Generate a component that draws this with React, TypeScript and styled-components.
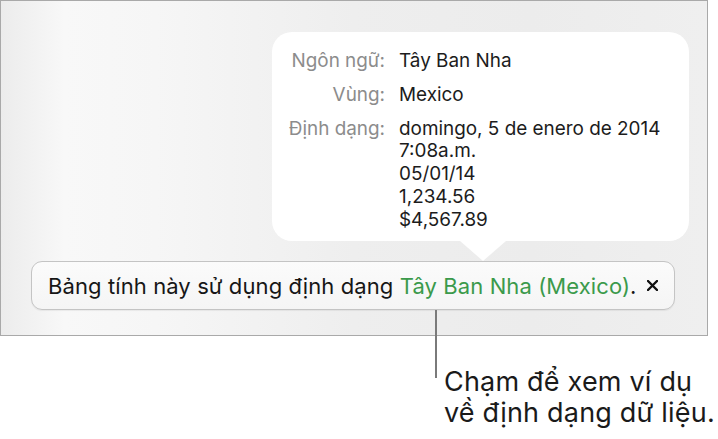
import styled, { createGlobalStyle } from "styled-components";

const Global = createGlobalStyle`
  html, body {
    margin: 0;
    padding: 0;
    background: #fff;
  }
  body {
    font-family: Inter, "Noto Sans", "Liberation Sans", sans-serif;
  }
`;

const rows = [
  { label: "Ngôn ngữ:", values: ["Tây Ban Nha"] },
  { label: "Vùng:", values: ["Mexico"] },
  {
    label: "Định dạng:",
    values: [
      "domingo, 5 de enero de 2014",
      "7:08a.m.",
      "05/01/14",
      "1,234.56",
      "$4,567.89",
    ],
  },
];

const CloseIcon = () => (
  <svg width="11" height="11" viewBox="0 0 11 11">
    <path d="M1 1 L10 10 M10 1 L1 10" stroke="#111" strokeWidth="2.4" strokeLinecap="round" />
  </svg>
);

const App = () => {
  return (
    <Page>
      <Global />
      <Frame>
        <Popover>
          {rows.map((r) => (
            <Row key={r.label}>
              <Label>{r.label}</Label>
              <Values>
                {r.values.map((v) => (
                  <div key={v}>{v}</div>
                ))}
              </Values>
            </Row>
          ))}
        </Popover>
        <Banner>
          <BannerText>
            Bảng tính này sử dụng định dạng <Green>Tây Ban Nha (Mexico)</Green>.
          </BannerText>
          <Close>
            <CloseIcon />
          </Close>
        </Banner>
      </Frame>
      <Callout>
        <Leader />
        <CalloutText>
          Chạm để xem ví dụ
          <br />
          về định dạng dữ liệu.
        </CalloutText>
      </Callout>
    </Page>
  );
};

export default App;

const Page = styled.div`
  width: 718px;
  height: 439px;
  overflow: hidden;
  background: #fff;
`;

const Frame = styled.div`
  box-sizing: border-box;
  width: 708px;
  height: 336px;
  border: 1.5px solid #a9a9a9;
  background: linear-gradient(
    90deg,
    #ececec 0%,
    #f8f8f8 9%,
    #f6f6f6 22%,
    #eeeeee 50%,
    #ececec 75%,
    #efefef 100%
  );
  display: flex;
  flex-direction: column;
  padding: 31px 0 0 30px;
`;

const Popover = styled.div`
  position: relative;
  box-sizing: border-box;
  margin-left: 241px;
  width: 417px;
  height: 209px;
  background: #fff;
  border-radius: 20px;
  padding: 18px 0 0 0;
  display: flex;
  flex-direction: column;
  gap: 11px;

  &::after {
    content: "";
    position: absolute;
    left: 188px;
    bottom: -20px;
    width: 0;
    height: 0;
    border-left: 23px solid transparent;
    border-right: 23px solid transparent;
    border-top: 20px solid #fff;
  }
`;

const Row = styled.div`
  display: flex;
  align-items: flex-start;
  font-size: 18.9px;
  line-height: 22.8px;
`;

const Label = styled.div`
  width: 113px;
  text-align: right;
  color: #8c8c8c;
  flex-shrink: 0;
`;

const Values = styled.div`
  margin-left: 14px;
  color: #1c1c1c;
`;

const Banner = styled.div`
  box-sizing: border-box;
  margin-top: 20px;
  width: 644px;
  height: 49px;
  border: 1px solid #c4c4c4;
  border-radius: 11px;
  background: linear-gradient(180deg, #fbfbfb 0%, #f5f5f5 100%);
  box-shadow: 0 1px 1px rgba(0, 0, 0, 0.06);
  display: flex;
  align-items: center;
  padding: 0 15px 0 16px;
`;

const BannerText = styled.div`
  flex: 1;
  font-size: 22px;
  letter-spacing: 0.1px;
  color: #161616;
  white-space: nowrap;
`;

const Green = styled.span`
  color: #3b9a4b;
`;

const Close = styled.div`
  display: flex;
  align-items: center;
  justify-content: center;
  width: 14px;
  height: 14px;
`;

const Callout = styled.div`
  display: flex;
  align-items: flex-start;
  margin: 30px 0 0 435px;
`;

const Leader = styled.div`
  position: relative;
  z-index: 1;
  width: 2px;
  height: 68px;
  margin-top: -56px;
  background: #7a7a7a;
  flex-shrink: 0;
`;

const CalloutText = styled.div`
  margin-left: 7px;
  font-size: 27px;
  line-height: 31px;
  letter-spacing: 0.2px;
  color: #1a1a1a;
  white-space: nowrap;
`;
